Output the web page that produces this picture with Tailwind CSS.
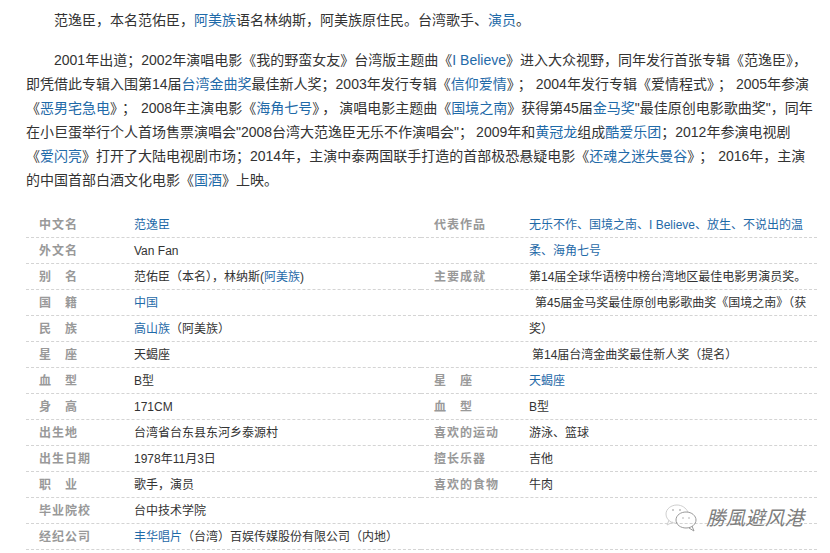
<!DOCTYPE html>
<html lang="zh-CN">
<head>
  <meta charset="UTF-8" />
  <title>范逸臣</title>
  <script src="https://cdn.jsdelivr.net/npm/@tailwindcss/browser@4"></script>
</head>
<body class="bg-white text-[#333] font-['Liberation_Sans','Noto_Sans_CJK_SC',sans-serif]">
  <div class="relative w-[830px] h-[553px] overflow-hidden pt-2">
    <!-- intro -->
    <div class="pl-[26px] text-[14px] leading-[24px] whitespace-nowrap">
      <p class="indent-[28px]">范逸臣，本名范佑臣，<a class="text-[#1f6aa8]">阿美族</a>语名林纳斯，阿美族原住民。台湾歌手、<a class="text-[#1f6aa8]">演员</a>。</p>
      <p class="mt-4 indent-[28px]">2001年出道；2002年演唱电影《我的野蛮女友》台湾版主题曲《<a class="text-[#1f6aa8]">I Believe</a>》进入大众视野，同年发行首张专辑《范逸臣》，<br />
      即凭借此专辑入围第14届<a class="text-[#1f6aa8]">台湾金曲奖</a>最佳新人奖；2003年发行专辑《<a class="text-[#1f6aa8]">信仰爱情</a>》<span class="mx-[4px]">；</span>2004年发行专辑《爱情程式》<span class="mx-[4px]">；</span>2005年参演<br />
      《<a class="text-[#1f6aa8]">恶男宅急电</a>》<span class="mx-[5px]">；</span>2008年主演电影《<a class="text-[#1f6aa8]">海角七号</a>》<span class="mx-[3px]">，</span>演唱电影主题曲《<a class="text-[#1f6aa8]">国境之南</a>》获得第45届<a class="text-[#1f6aa8]">金马奖</a>"最佳原创电影歌曲奖"，同年<br />
      在小巨蛋举行个人首场售票演唱会"2008台湾大范逸臣无乐不作演唱会"<span class="mr-[3px]">；</span>2009年和<a class="text-[#1f6aa8]">黄冠龙</a>组成<a class="text-[#1f6aa8]">酷爱乐团</a>；2012年参演电视剧<br />
      《<a class="text-[#1f6aa8]">爱闪亮</a>》打开了大陆电视剧市场；2014年，主演中泰两国联手打造的首部极恐悬疑电影《<a class="text-[#1f6aa8]">还魂之迷失曼谷</a>》<span class="mx-[5px]">；</span>2016年，主演<br />
      的中国首部白酒文化电影《<a class="text-[#1f6aa8]">国酒</a>》上映。</p>
    </div>

    <!-- basic info -->
    <div class="mt-5 ml-[26px] w-[791px] grid grid-cols-[395px_396px] auto-rows-[26px] text-[12px] whitespace-nowrap">
      <div class="flex items-center border-b border-dashed border-[#d4d4d4] pl-[13px]"><span class="w-[95px] font-bold tracking-[1px] text-[#999]">中文名</span><a class="text-[#1f6aa8]">范逸臣</a></div>
      <div class="flex items-center border-b border-dashed border-[#d4d4d4] pl-[13px]"><span class="w-[95px] font-bold tracking-[1px] text-[#999]">代表作品</span><a class="text-[#1f6aa8]">无乐不作、国境之南、I Believe、放生、不说出的温</a></div>

      <div class="flex items-center border-b border-dashed border-[#d4d4d4] pl-[13px]"><span class="w-[95px] font-bold tracking-[1px] text-[#999]">外文名</span><span>Van Fan</span></div>
      <div class="flex items-center border-b border-dashed border-[#d4d4d4] pl-[108px]"><a class="text-[#1f6aa8]">柔、海角七号</a></div>

      <div class="flex items-center border-b border-dashed border-[#d4d4d4] pl-[13px]"><span class="w-[95px] font-bold tracking-[1px] text-[#999]">别　名</span><span>范佑臣（本名），林纳斯(<a class="text-[#1f6aa8]">阿美族</a>)</span></div>
      <div class="flex items-center border-b border-dashed border-[#d4d4d4] pl-[13px]"><span class="w-[95px] font-bold tracking-[1px] text-[#999]">主要成就</span><span>第14届全球华语榜中榜台湾地区最佳电影男演员奖。</span></div>

      <div class="flex items-center border-b border-dashed border-[#d4d4d4] pl-[13px]"><span class="w-[95px] font-bold tracking-[1px] text-[#999]">国　籍</span><a class="text-[#1f6aa8]">中国</a></div>
      <div class="flex items-center border-b border-dashed border-[#d4d4d4] pl-[114px]"><span>第45届金马奖最佳原创电影歌曲奖《国境之南》（获</span></div>

      <div class="flex items-center border-b border-dashed border-[#d4d4d4] pl-[13px]"><span class="w-[95px] font-bold tracking-[1px] text-[#999]">民　族</span><span><a class="text-[#1f6aa8]">高山族</a>（阿美族）</span></div>
      <div class="flex items-center border-b border-dashed border-[#d4d4d4] pl-[108px]"><span>奖）</span></div>

      <div class="flex items-center border-b border-dashed border-[#d4d4d4] pl-[13px]"><span class="w-[95px] font-bold tracking-[1px] text-[#999]">星　座</span><span>天蝎座</span></div>
      <div class="flex items-center border-b border-dashed border-[#d4d4d4] pl-[111px]"><span>第14届台湾金曲奖最佳新人奖（提名）</span></div>

      <div class="flex items-center border-b border-dashed border-[#d4d4d4] pl-[13px]"><span class="w-[95px] font-bold tracking-[1px] text-[#999]">血　型</span><span>B型</span></div>
      <div class="flex items-center border-b border-dashed border-[#d4d4d4] pl-[13px]"><span class="w-[95px] font-bold tracking-[1px] text-[#999]">星　座</span><a class="text-[#1f6aa8]">天蝎座</a></div>

      <div class="flex items-center border-b border-dashed border-[#d4d4d4] pl-[13px]"><span class="w-[95px] font-bold tracking-[1px] text-[#999]">身　高</span><span>171CM</span></div>
      <div class="flex items-center border-b border-dashed border-[#d4d4d4] pl-[13px]"><span class="w-[95px] font-bold tracking-[1px] text-[#999]">血　型</span><span>B型</span></div>

      <div class="flex items-center border-b border-dashed border-[#d4d4d4] pl-[13px]"><span class="w-[95px] font-bold tracking-[1px] text-[#999]">出生地</span><span>台湾省台东县东河乡泰源村</span></div>
      <div class="flex items-center border-b border-dashed border-[#d4d4d4] pl-[13px]"><span class="w-[95px] font-bold tracking-[1px] text-[#999]">喜欢的运动</span><span>游泳、篮球</span></div>

      <div class="flex items-center border-b border-dashed border-[#d4d4d4] pl-[13px]"><span class="w-[95px] font-bold tracking-[1px] text-[#999]">出生日期</span><span>1978年11月3日</span></div>
      <div class="flex items-center border-b border-dashed border-[#d4d4d4] pl-[13px]"><span class="w-[95px] font-bold tracking-[1px] text-[#999]">擅长乐器</span><span>吉他</span></div>

      <div class="flex items-center border-b border-dashed border-[#d4d4d4] pl-[13px]"><span class="w-[95px] font-bold tracking-[1px] text-[#999]">职　业</span><span>歌手，演员</span></div>
      <div class="flex items-center border-b border-dashed border-[#d4d4d4] pl-[13px]"><span class="w-[95px] font-bold tracking-[1px] text-[#999]">喜欢的食物</span><span>牛肉</span></div>

      <div class="flex items-center border-b border-dashed border-[#d4d4d4] pl-[13px]"><span class="w-[95px] font-bold tracking-[1px] text-[#999]">毕业院校</span><span>台中技术学院</span></div>
      <div class="border-b border-dashed border-[#d4d4d4]"></div>

      <div class="flex items-center border-b border-dashed border-[#d4d4d4] pl-[13px]"><span class="w-[95px] font-bold tracking-[1px] text-[#999]">经纪公司</span><span><a class="text-[#1f6aa8]">丰华唱片</a>（台湾）百娱传媒股份有限公司（内地）</span></div>
      <div class="border-b border-dashed border-[#d4d4d4]"></div>
    </div>

    <!-- watermark -->
    <div class="absolute left-[664px] top-[503px] flex items-center gap-2">
      <svg width="34" height="30" viewBox="0 0 34 30" fill="none" stroke="#9a9a9a" stroke-width="1">
        <path d="M14 20 C8 21 2 17 2 11 C2 6 7 2 13 2 C18 2 22 5 24 9" stroke="#cfcfcf" />
        <path d="M5 17 L3 22 L9 19" stroke="#cfcfcf" />
        <circle cx="9" cy="7" r="1" fill="#bbb" stroke="none" />
        <circle cx="16" cy="7" r="1" fill="#bbb" stroke="none" />
        <path d="M12 17 C12 12 17 9 22 9 C28 9 32 13 32 17 C32 21 28 25 22 25 C17 25 12 22 12 17 Z" />
        <path d="M28 23 L30 28 L25 25" />
        <circle cx="19" cy="15" r="0.8" fill="#aaa" stroke="none" />
        <circle cx="25" cy="15" r="0.8" fill="#aaa" stroke="none" />
      </svg>
      <span class="text-[19.6px] leading-[28px] italic text-[#7d7d7d]">勝風避风港</span>
    </div>
  </div>
</body>
</html>
